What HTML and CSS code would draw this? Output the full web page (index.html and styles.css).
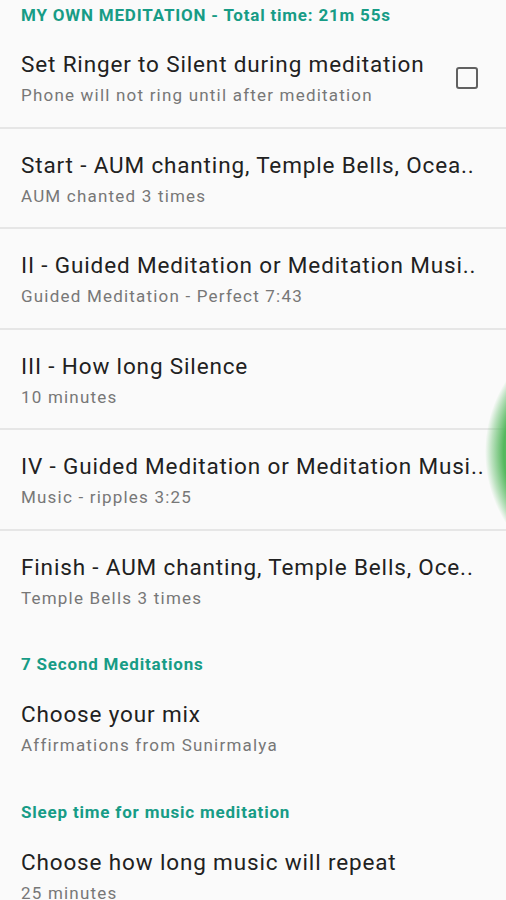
FILE: index.html
```html
<!DOCTYPE html>
<html lang="en">
<head>
<meta charset="utf-8">
<title>My Own Meditation</title>
<link rel="stylesheet" href="styles.css">
</head>
<body>
<div class="screen">
  <div class="cat cat--first">MY OWN MEDITATION - Total time: 21m 55s</div>
  <div class="row row--div">
    <div class="text">
      <div class="title">Set Ringer to Silent during meditation</div>
      <div class="sub">Phone will not ring until after meditation</div>
    </div>
    <div class="check"></div>
  </div>
  <div class="row row--div">
    <div class="text">
      <div class="title">Start - AUM chanting, Temple Bells, Ocea..</div>
      <div class="sub">AUM chanted 3 times</div>
    </div>
  </div>
  <div class="row row--div">
    <div class="text">
      <div class="title">II - Guided Meditation or Meditation Musi..</div>
      <div class="sub">Guided Meditation - Perfect 7:43</div>
    </div>
  </div>
  <div class="row row--div">
    <div class="text">
      <div class="title">III - How long Silence</div>
      <div class="sub">10 minutes</div>
    </div>
  </div>
  <div class="row row--div">
    <div class="text">
      <div class="title">IV - Guided Meditation or Meditation Musi..</div>
      <div class="sub">Music - ripples 3:25</div>
    </div>
  </div>
  <div class="row">
    <div class="text">
      <div class="title">Finish - AUM chanting, Temple Bells, Oce..</div>
      <div class="sub">Temple Bells 3 times</div>
    </div>
  </div>
  <div class="cat">7 Second Meditations</div>
  <div class="row">
    <div class="text">
      <div class="title">Choose your mix</div>
      <div class="sub">Affirmations from Sunirmalya</div>
    </div>
  </div>
  <div class="cat">Sleep time for music meditation</div>
  <div class="row">
    <div class="text">
      <div class="title">Choose how long music will repeat</div>
      <div class="sub">25 minutes</div>
    </div>
  </div>
  <div class="blob"></div>
</div>
</body>
</html>
```
FILE: styles.css
```css
html, body {
  margin: 0;
  padding: 0;
  background: #fafafa;
}
body {
  width: 506px;
  height: 900px;
  overflow: hidden;
  font-family: Roboto, "Noto Sans", sans-serif;
}
.screen {
  position: relative;
  width: 506px;
  height: 900px;
  overflow: hidden;
}
.cat {
  box-sizing: border-box;
  height: 47px;
  padding: 23px 21px 0;
  font-size: 17px;
  line-height: 20px;
  font-weight: 700;
  letter-spacing: 0.8px;
  color: #179c86;
  white-space: nowrap;
}
.cat--first {
  height: 28px;
  padding-top: 5px;
}
.row {
  box-sizing: border-box;
  height: 100.5px;
  display: flex;
  align-items: flex-start;
  padding: 22px 28px 0 21px;
}
.row--div {
  border-bottom: 2px solid #e6e6e6;
}
.text {
  flex: 1;
  min-width: 0;
}
.title {
  font-size: 22.5px;
  line-height: 28px;
  letter-spacing: 0.85px;
  color: #212121;
  white-space: nowrap;
}
.sub {
  margin-top: 6px;
  font-size: 17px;
  line-height: 22px;
  letter-spacing: 1.2px;
  color: #777777;
  white-space: nowrap;
}
.check {
  flex: none;
  align-self: center;
  margin-top: -21px;
  margin-left: 10px;
  box-sizing: border-box;
  width: 22px;
  height: 22px;
  border: 2px solid #616161;
  border-radius: 3px;
}
.blob {
  position: absolute;
  left: 485px;
  top: 319px;
  width: 266px;
  height: 266px;
  border-radius: 50%;
  background: radial-gradient(circle closest-side, #4caf50 0%, #55b85e 86%, rgba(110, 195, 118, 0.45) 95%, rgba(250, 250, 250, 0) 100%);
}
```
